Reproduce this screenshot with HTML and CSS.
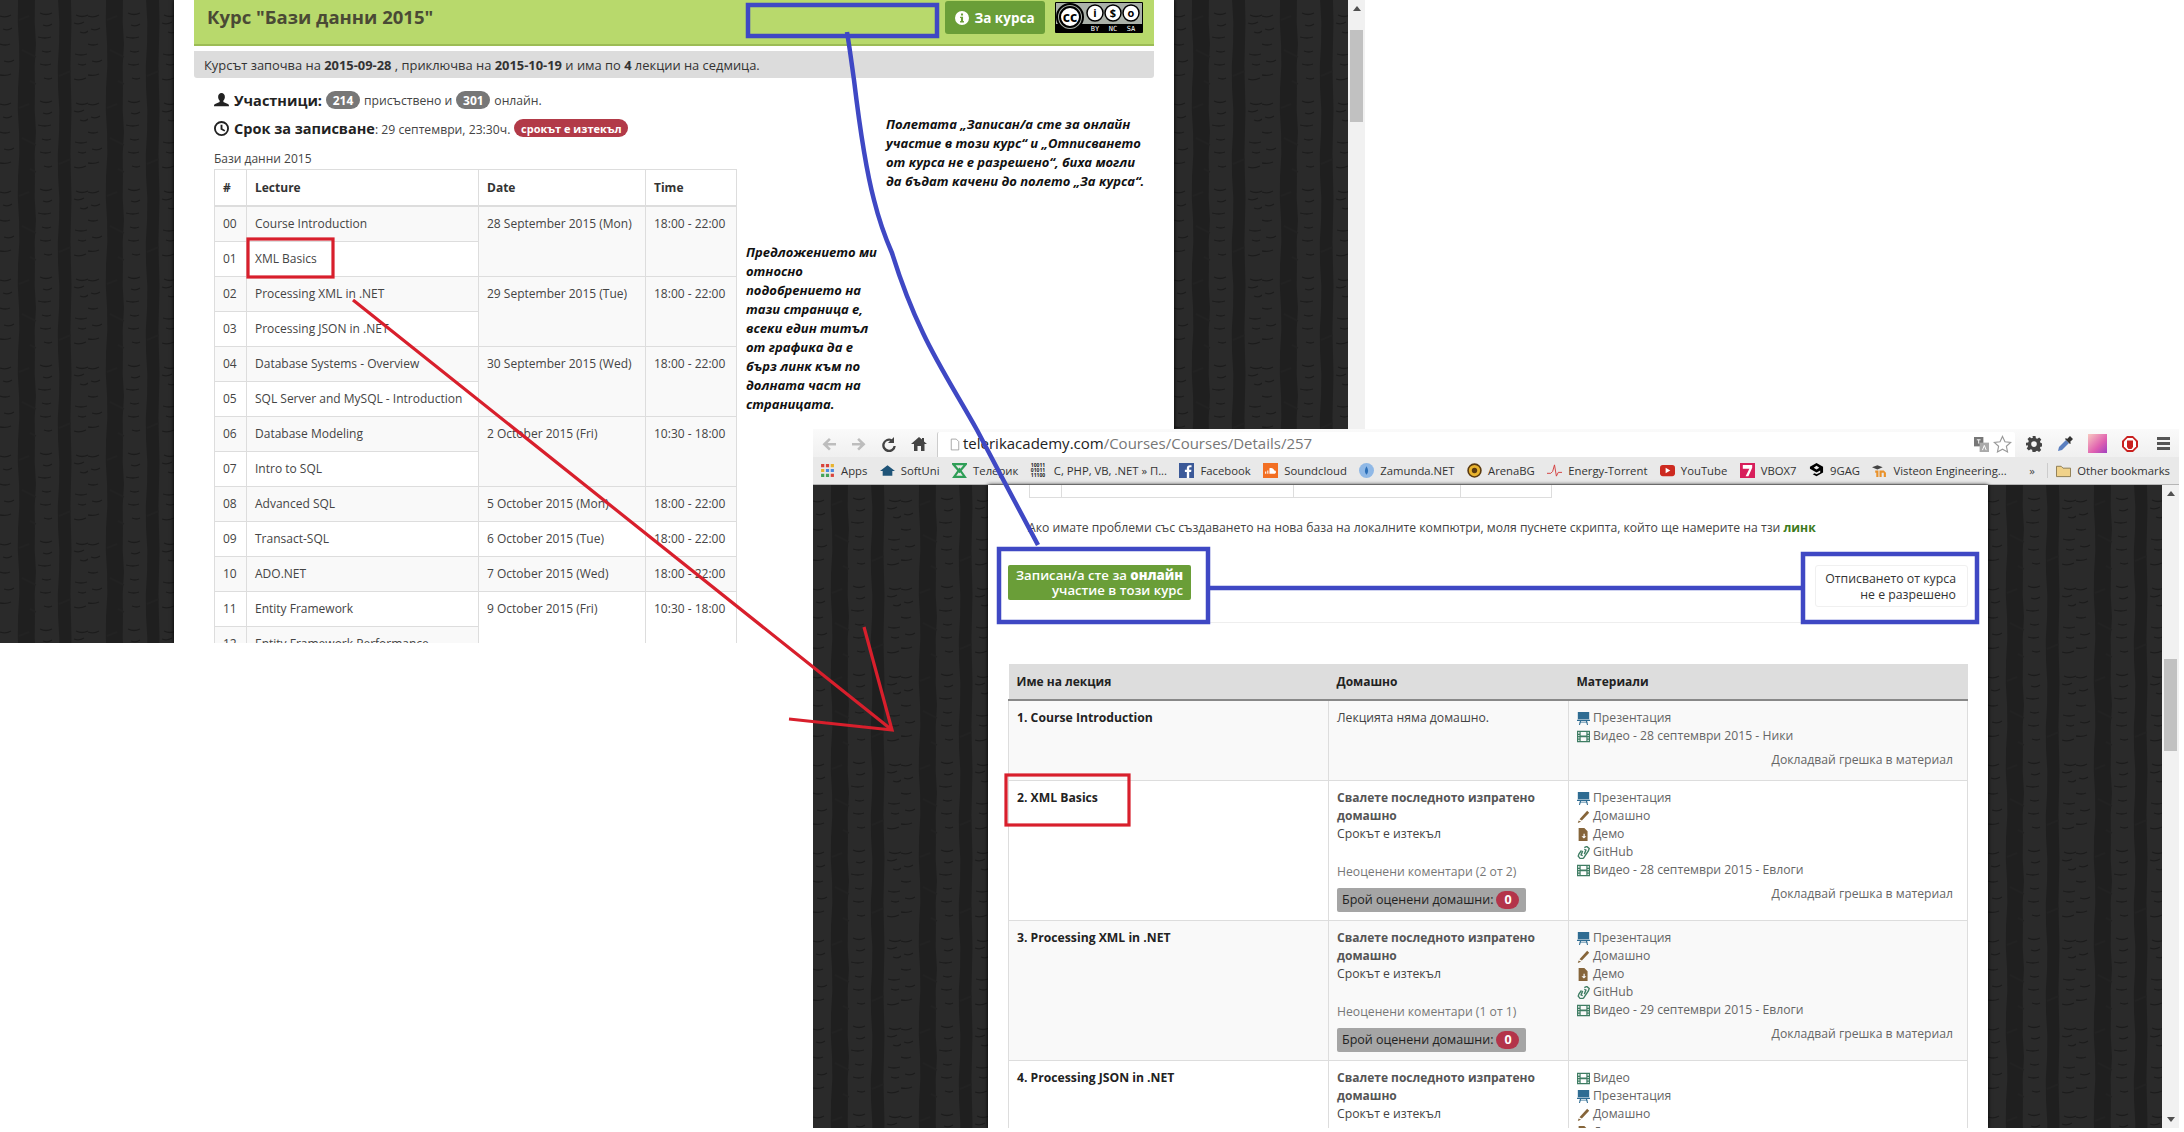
FILE: index.html
```html
<!DOCTYPE html>
<html lang="bg">
<head>
    <meta charset="UTF-8">
    <title>Курс "Бази данни 2015"</title>
    <link rel="stylesheet" href="styles.css">
</head>
<body>
<svg class="defs" aria-hidden="true">
    <defs>
        <!-- dark tree bark background of the site -->
        <pattern id="bark" width="88" height="88" patternUnits="userSpaceOnUse">
            <rect width="88" height="88" fill="#2a2a2a"/>
            <path d="M18 0 Q17 22 19 44 Q20 66 18 88 H35 Q34 66 36 44 Q34 22 35 0Z" fill="#1f1f1f"/>
            <path d="M58 0 Q60 22 59 44 Q57 66 58 88 H71 Q70 66 71 44 Q72 22 71 0Z" fill="#1f1f1f"/>
            <g fill="none" stroke="#1c1c1c" stroke-width="1.3">
                <path d="M0 16q6 2 11-1M3 29q5 2 9-1M0 44q6 2 10 0M4 61q6 2 10-1M0 75q7 1 11-1"/>
                <path d="M40 13q6 3 12 0M43 25q5 2 9-1M38 37q7 2 13 0M42 51q5 2 9 0M40 64q6 2 11 0M44 78q5 2 8 0"/>
                <path d="M76 15q6 3 12 0M74 23q5 2 10-1M80 32q5 2 8-1M75 54q6 2 12 0M78 64q5 2 8 0M74 79q6 2 12-1"/>
            </g>
            <g fill="none" stroke="#222" stroke-width="1.4">
                <path d="M19 20l10-4M22 50l14 7M59 76l12-5M36 84l-6-3"/>
            </g>
        </pattern>
        <symbol id="i-user" viewBox="0 0 16 16"><path d="M8 0c2.2 0 3.6 1.8 3.6 4.2 0 1.700-.7 3-1.600 3.800v1.500l4.800 2.200c.8.400 1.200 1 1.200 2.300H0c0-1.300.4-1.900 1.200-2.300L6 9.500V8C5.100 7.200 4.400 5.900 4.400 4.200 4.400 1.800 5.800 0 8 0z"/></symbol>
        <symbol id="i-clock" viewBox="0 0 16 16"><path fill-rule="evenodd" d="M8 0a8 8 0 1 1 0 16A8 8 0 0 1 8 0zm0 2a6 6 0 1 0 0 12A6 6 0 0 0 8 2zM7 4h2v4l3 1.800-1 1.500L7 9z"/></symbol>
        <symbol id="i-info" viewBox="0 0 16 16"><path fill-rule="evenodd" d="M8 0a8 8 0 1 1 0 16A8 8 0 0 1 8 0zM6.800 2.800v2.400h2.400V2.800zM5.800 6.600v1.500h1v3.200h-1v1.700h4.400v-1.700h-1V6.600z"/></symbol>
        <symbol id="i-slides" viewBox="0 0 16 16"><path fill="#2f6c92" d="M1 0h14v9H1z"/><path fill="#2f6c92" d="M0 9.500h16V11H0zM3 12h10v1H3z"/><path fill="none" stroke="#2f6c92" stroke-width="1.300" d="M4.500 11l-1.500 5M11.500 11l1.500 5"/></symbol>
        <symbol id="i-film" viewBox="0 0 16 16"><path fill="#3f7d63" fill-rule="evenodd" d="M0 1h16v14H0zM1.500 2.500v2h1.500v-2zM1.500 6v1.500h1.500V6zM1.500 9v1.500h1.500V9zM1.500 12v1.500h1.500V12zM13 2.500v2h1.500v-2zM13 6v1.500h1.500V6zM13 9v1.500h1.500V9zM13 12v1.500h1.500V12zM4.500 2.500v4.200h7V2.500zM4.500 9v4.500h7V9z"/></symbol>
        <symbol id="i-pencil" viewBox="0 0 16 16"><path fill="#86653a" d="M12.500 1l2.500 2.500-9 9.500-3-1.500zM2 13l3 1.500-4 1.500z"/></symbol>
        <symbol id="i-demo" viewBox="0 0 16 16"><path fill="#86653a" fill-rule="evenodd" d="M2 0h7l4 4v12H2zM8 7v3H5.500L8.500 13l3-3H9.500V7z"/></symbol>
        <symbol id="i-link" viewBox="0 0 16 16"><g fill="none" stroke="#3f7d63" stroke-width="1.700"><path d="M9 2l3-1.500 3 2.500-1 3-6 9-4 .5-2.500-3 1-3 3-4"/><path d="M7 6l-2 5 2 1M9 10l2-5-2-1"/></g></symbol>
        <symbol id="i-back" viewBox="0 0 16 16"><path d="M8 2l1.800 1.800L6.600 7H15v2.500H6.600l3.200 3.200L8 14.500 1.500 8.200z"/></symbol>
        <symbol id="i-reload" viewBox="0 0 16 16"><path d="M13 1v6H7l2.200-2.200A4.500 4.500 0 1 0 12.500 10h2.300A6.800 6.800 0 1 1 10.800 3.200z"/></symbol>
        <symbol id="i-home" viewBox="0 0 16 16"><path d="M8 1l3 2.600V2h2v3.400L16 8h-2.500v7H10v-5H6.500v5H3V8H0z"/></symbol>
        <symbol id="i-gear" viewBox="0 0 16 16"><path fill-rule="evenodd" d="M6.500 0h3l.4 2.200 1.400.6L13.200 1.500l2.100 2.100-1.300 1.900.6 1.400 2 .4v3l-2.100.4-.6 1.400 1.300 1.800-2.100 2.100-1.900-1.300-1.400.6L9.500 16h-3l-.4-2.200-1.400-.6-1.900 1.300-2.100-2.100 1.300-1.800-.6-1.500L0 9.800v-3l2.200-.4.600-1.400-1.300-1.900 2.100-2.100 1.900 1.300 1.400-.6zM8 5.300a2.800 2.800 0 1 0 0 5.600 2.800 2.800 0 0 0 0-5.600z"/></symbol>
    </defs>
</svg>

<div class="canvas">

    <!-- older screenshot, the page with the programme -->
    <section class="shot shot-old">
        <svg class="bark side-old"><rect width="100%" height="100%" fill="url(#bark)"/></svg>
        <div class="old-page">
            <header class="course-head">
                <h1>Курс "Бази данни 2015"</h1>
                <a class="about-btn"><svg class="ico-sm"><use href="#i-info"/></svg>За курса</a>
                <svg class="cc-badge" viewBox="0 0 88 31">
                    <rect width="88" height="31" rx="1" fill="#000"/>
                    <rect x="1" y="1" width="86" height="21" fill="#aab1a9"/>
                    <circle cx="15" cy="15" r="13" fill="#aab1a9" stroke="#000" stroke-width="2"/>
                    <circle cx="15" cy="15" r="10" fill="#fff" stroke="#000" stroke-width="2"/>
                    <text x="15" y="19.500" class="cc-big">cc</text>
                    <circle cx="40" cy="11" r="8" fill="#fff" stroke="#000" stroke-width="1.500"/>
                    <text x="40" y="15" class="cc-mid">i</text>
                    <circle cx="58" cy="11" r="8" fill="#fff" stroke="#000" stroke-width="1.500"/>
                    <text x="58" y="15" class="cc-mid">$</text>
                    <circle cx="76" cy="11" r="8" fill="#fff" stroke="#000" stroke-width="1.500"/>
                    <text x="76" y="15" class="cc-mid">o</text>
                    <text x="40" y="29" class="cc-low">BY</text>
                    <text x="58" y="29" class="cc-low">NC</text>
                    <text x="76" y="29" class="cc-low">SA</text>
                </svg>
            </header>
            <div class="course-dates">
                Курсът започва на <b>2015-09-28</b> , приключва на <b>2015-10-19</b> и има по <b>4</b> лекции на седмица.
            </div>
            <div class="info-line first">
                <svg class="ico-lg"><use href="#i-user"/></svg>
                <strong>Участници:</strong>
                <span class="pill">214</span> присъствено и <span class="pill">301</span> онлайн.
            </div>
            <div class="info-line">
                <svg class="ico-lg"><use href="#i-clock"/></svg>
                <span><strong>Срок за записване</strong>: 29 септември, 23:30ч.</span>
                <span class="pill pill-red">срокът е изтекъл</span>
            </div>
            <div class="caption">Бази данни 2015</div>
            <table class="programme">
                <thead>
                    <tr><th class="c-num">#</th><th class="c-lec">Lecture</th><th class="c-date">Date</th><th>Time</th></tr>
                </thead>
                <tbody>
                    <tr><td>00</td><td>Course Introduction</td><td rowspan="2">28 September 2015 (Mon)</td><td rowspan="2">18:00 - 22:00</td></tr>
                    <tr><td>01</td><td>XML Basics</td></tr>
                    <tr><td>02</td><td>Processing XML in .NET</td><td rowspan="2">29 September 2015 (Tue)</td><td rowspan="2">18:00 - 22:00</td></tr>
                    <tr><td>03</td><td>Processing JSON in .NET</td></tr>
                    <tr><td>04</td><td>Database Systems - Overview</td><td rowspan="2">30 September 2015 (Wed)</td><td rowspan="2">18:00 - 22:00</td></tr>
                    <tr><td>05</td><td>SQL Server and MySQL - Introduction</td></tr>
                    <tr><td>06</td><td>Database Modeling</td><td rowspan="2">2 October 2015 (Fri)</td><td rowspan="2">10:30 - 18:00</td></tr>
                    <tr><td>07</td><td>Intro to SQL</td></tr>
                    <tr><td>08</td><td>Advanced SQL</td><td>5 October 2015 (Mon)</td><td>18:00 - 22:00</td></tr>
                    <tr><td>09</td><td>Transact-SQL</td><td>6 October 2015 (Tue)</td><td>18:00 - 22:00</td></tr>
                    <tr><td>10</td><td>ADO.NET</td><td>7 October 2015 (Wed)</td><td>18:00 - 22:00</td></tr>
                    <tr class="white-row"><td>11</td><td>Entity Framework</td><td rowspan="2">9 October 2015 (Fri)</td><td rowspan="2">10:30 - 18:00</td></tr>
                    <tr><td>12</td><td>Entity Framework Performance</td></tr>
                </tbody>
            </table>
        </div>
        <svg class="bark side-old"><rect width="100%" height="100%" fill="url(#bark)"/></svg>
        <div class="scrollbar">
            <i class="arrow-up"></i>
            <i class="thumb thumb-old"></i>
        </div>
    </section>

    <!-- newer screenshot, browser window with the lecture table -->
    <section class="shot shot-new">
        <div class="toolbar">
            <svg class="nav-ico faded"><use href="#i-back"/></svg>
            <svg class="nav-ico faded flip"><use href="#i-back"/></svg>
            <svg class="nav-ico"><use href="#i-reload"/></svg>
            <svg class="nav-ico"><use href="#i-home"/></svg>
            <div class="omnibox">
                <svg class="doc-ico" viewBox="0 0 12 14"><path d="M1.500.5h6l3 3v10h-9z" fill="#fff" stroke="#999"/></svg>
                <span class="url">telerikacademy.com<span class="url-path">/Courses/Courses/Details/257</span></span>
                <svg class="trans-ico" viewBox="0 0 16 16"><path d="M0 0h10v10H0z" fill="#777"/><path d="M6 6h10v10H6z" fill="#aaa"/><path d="M3 3h4M5 3v4M9 14l2-5 2 5" fill="none" stroke="#fff"/></svg>
                <svg class="star-ico" viewBox="0 0 20 20"><path d="M10 1.500l2.600 5.600 6 .7-4.500 4.100 1.200 6L10 15l-5.300 2.900 1.200-6L1.400 7.800l6-.7z" fill="#fff" stroke="#999" stroke-width="1.200"/></svg>
            </div>
            <div class="tool-actions">
                <svg class="nav-ico"><use href="#i-gear"/></svg>
                <svg class="nav-ico" viewBox="0 0 16 16"><path d="M1 15l1-4 7-7 3 3-7 7z" fill="#5b7fc0"/><path d="M10 3l3-3 3 3-3 3 1 1-1 1-5-5 1-1z" fill="#333"/></svg>
                <i class="color-tile"></i>
                <svg class="nav-ico" viewBox="0 0 16 16"><path d="M5 0h6l5 5v6l-5 5H5l-5-5V5z" fill="#c9201f"/><path d="M5.500 2h5L14 5.500v5L10.500 14h-5L2 10.500v-5z" fill="#fff"/><path d="M5 4.500h6V11l-1.500 2h-3L5 11z" fill="#c9201f"/></svg>
                <span class="menu-ico"><i></i><i></i><i></i></span>
            </div>
        </div>

        <nav class="bookmarks">
            <a><svg class="bm" viewBox="0 0 14 14"><path fill="#d9443a" d="M1 1h3v3H1zM5.500 1h3v3h-3z"/><path fill="#e8b32e" d="M10 1h3v3h-3zM1 5.500h3v3H1z"/><path fill="#4a8ae0" d="M5.500 5.500h3v3h-3zM10 5.500h3v3h-3z"/><path fill="#46a35a" d="M1 10h3v3H1zM5.500 10h3v3h-3z"/><path fill="#d9443a" d="M10 10h3v3h-3z"/></svg>Apps</a>
            <a><svg class="bm" viewBox="0 0 14 14"><path fill="#1f5478" d="M7 2l7 5.500h-2.500V12h-9V7.500H0z"/></svg>SoftUni</a>
            <a><svg class="bm" viewBox="0 0 14 14"><path fill="none" stroke="#2f9e57" stroke-width="2" d="M1 1h12L7 8zM7 6l5 7H2z"/></svg>Телерик</a>
            <a><span class="binary">10011<br>01011<br>11100</span>C, PHP, VB, .NET » П...</a>
            <a><svg class="bm" viewBox="0 0 14 14"><path fill="#3b5998" d="M0 0h14v14H0z"/><path fill="#fff" d="M9.500 14V8.500h1.800l.3-2.200H9.500V5c0-.6.200-1 1-1h1.200V2.100C11.400 2 10.800 2 10.200 2 8.500 2 7.300 3 7.300 4.800v1.500H5.500v2.200h1.800V14z"/></svg>Facebook</a>
            <a><svg class="bm" viewBox="0 0 14 14"><path fill="#f26f23" d="M0 0h14v14H0z"/><path fill="#fff" d="M2 10V8h1v2zM4 10V7h1v3zM6 10V5c2-1 4 0 4.500 2 2-.5 2.500 3-.5 3z"/></svg>Soundcloud</a>
            <a><svg class="bm" viewBox="0 0 14 14"><circle cx="7" cy="7" r="7" fill="#8fb8e6"/><path fill="#2c6fb8" d="M7 3c-2 3-2 6 0 8 2-2 2-5 0-8z"/></svg>Zamunda.NET</a>
            <a><svg class="bm" viewBox="0 0 14 14"><circle cx="7" cy="7" r="6" fill="#e8b32e" stroke="#5a3a10" stroke-width="1.500"/><circle cx="7" cy="7" r="2.500" fill="#5a3a10"/></svg>ArenaBG</a>
            <a><svg class="bm" viewBox="0 0 16 14"><path fill="none" stroke="#d33c3c" d="M0 10h4l2-2 2-7 2 12 2-4h4"/></svg>Energy-Torrent</a>
            <a><svg class="bm" viewBox="0 0 16 14"><rect y="1" width="16" height="12" rx="3" fill="#cd2a20"/><path fill="#fff" d="M6 4l5 3-5 3z"/></svg>YouTube</a>
            <a><svg class="bm" viewBox="0 0 16 16"><path fill="#d81f5b" d="M0 0h16v16H0z"/><path fill="#fff" d="M3 2h10v3l-4 9H6l4-8H3z"/></svg>VBOX7</a>
            <a><svg class="bm" viewBox="0 0 14 16"><path fill="#000" fill-rule="evenodd" d="M7 0l7 4v6l-7 4-4-2 2-1 2 1 4-2V8L7 10 0 6V4zM7 3L4 5l3 2 3-2z"/></svg>9GAG</a>
            <a><svg class="bm" viewBox="0 0 14 14"><path fill="#444" d="M0 4l5-2 5 2-5 2z"/><path fill="#e9922b" d="M3 7h3v6H4V9H3zM7 7h4l2 2v4h-2V9H9v4H7z"/></svg>Visteon Engineering...</a>
            <span class="more">»</span>
            <a class="other"><svg class="bm" viewBox="0 0 16 14"><path d="M.5 2.500h5l2 2h8v9H.5z" fill="#f0d28a" stroke="#8b7a50"/></svg>Other bookmarks</a>
        </nav>

        <div class="viewport">
            <svg class="bark side-new"><rect width="100%" height="100%" fill="url(#bark)"/></svg>
            <div class="new-page">
                <div class="table-stub"><i></i><i></i><i></i><i></i></div>
                <p class="db-note">Ако имате проблеми със създаването на нова база на локалните компютри, моля пуснете скрипта, който ще намерите на тзи <a>линк</a></p>
                <div class="enroll-row">
                    <div class="enrolled">Записан/а сте за <b>онлайн</b><br>участие в този курс</div>
                    <div class="no-leave">Отписването от курса<br>не е разрешено</div>
                </div>
                <table class="lectures">
                    <thead>
                        <tr><th class="l-name">Име на лекция</th><th class="l-home">Домашно</th><th>Материали</th></tr>
                    </thead>
                    <tbody>
                        <tr>
                            <td class="lec-title">1. Course Introduction</td>
                            <td><div class="hw-line">Лекцията няма домашно.</div></td>
                            <td>
                                <div class="mat"><svg><use href="#i-slides"/></svg>Презентация</div>
                                <div class="mat"><svg><use href="#i-film"/></svg>Видео - 28 септември 2015 - Ники</div>
                                <div class="report">Докладвай грешка в материал</div>
                            </td>
                        </tr>
                        <tr>
                            <td class="lec-title">2. XML Basics</td>
                            <td>
                                <div class="hw-get">Свалете последното изпратено домашно</div>
                                <div class="hw-line">Срокът е изтекъл</div>
                                <div class="hw-unrated">Неоценени коментари (2 от 2)</div>
                                <div class="hw-count">Брой оценени домашни: <span class="zero">0</span></div>
                            </td>
                            <td>
                                <div class="mat"><svg><use href="#i-slides"/></svg>Презентация</div>
                                <div class="mat"><svg><use href="#i-pencil"/></svg>Домашно</div>
                                <div class="mat"><svg><use href="#i-demo"/></svg>Демо</div>
                                <div class="mat"><svg><use href="#i-link"/></svg>GitHub</div>
                                <div class="mat"><svg><use href="#i-film"/></svg>Видео - 28 септември 2015 - Евлоги</div>
                                <div class="report">Докладвай грешка в материал</div>
                            </td>
                        </tr>
                        <tr>
                            <td class="lec-title">3. Processing XML in .NET</td>
                            <td>
                                <div class="hw-get">Свалете последното изпратено домашно</div>
                                <div class="hw-line">Срокът е изтекъл</div>
                                <div class="hw-unrated">Неоценени коментари (1 от 1)</div>
                                <div class="hw-count">Брой оценени домашни: <span class="zero">0</span></div>
                            </td>
                            <td>
                                <div class="mat"><svg><use href="#i-slides"/></svg>Презентация</div>
                                <div class="mat"><svg><use href="#i-pencil"/></svg>Домашно</div>
                                <div class="mat"><svg><use href="#i-demo"/></svg>Демо</div>
                                <div class="mat"><svg><use href="#i-link"/></svg>GitHub</div>
                                <div class="mat"><svg><use href="#i-film"/></svg>Видео - 29 септември 2015 - Евлоги</div>
                                <div class="report">Докладвай грешка в материал</div>
                            </td>
                        </tr>
                        <tr>
                            <td class="lec-title">4. Processing JSON in .NET</td>
                            <td>
                                <div class="hw-get">Свалете последното изпратено домашно</div>
                                <div class="hw-line">Срокът е изтекъл</div>
                            </td>
                            <td>
                                <div class="mat"><svg><use href="#i-film"/></svg>Видео</div>
                                <div class="mat"><svg><use href="#i-slides"/></svg>Презентация</div>
                                <div class="mat"><svg><use href="#i-pencil"/></svg>Домашно</div>
                                <div class="mat"><svg><use href="#i-demo"/></svg>Демо</div>
                            </td>
                        </tr>
                    </tbody>
                </table>
            </div>
            <svg class="bark side-new-right"><rect width="100%" height="100%" fill="url(#bark)"/></svg>
            <div class="scrollbar">
                <i class="arrow-up"></i>
                <i class="thumb thumb-new"></i>
                <i class="arrow-down"></i>
            </div>
        </div>
    </section>

    <!-- notes written over the screenshots -->
    <p class="note note-fields">Полетата „Записан/а сте за онлайн<br>участие в този курс“ и „Отписването<br>от курса не е разрешено“, биха могли<br>да бъдат качени до полето „За курса“.</p>
    <p class="note note-links">Предложението ми<br>относно<br>подобрението на<br>тази страница е,<br>всеки един титъл<br>от графика да е<br>бърз линк към по<br>долната част на<br>страницата.</p>

    <svg class="marks" viewBox="0 0 2184 1132">
        <g fill="none" stroke="#3f48c4" stroke-width="4.500">
            <rect x="748" y="5" width="189" height="31"/>
            <rect x="999" y="549" width="209" height="73"/>
            <rect x="1803" y="554" width="174" height="68"/>
            <path d="M1210 588H1801"/>
            <path d="M847 32C850 50 852 66 854 80 860 130 866 170 874 200 879 220 885 237 892 253 901 282 911 308 923 333 938 365 958 396 977 430 997 468 1018 508 1038 545"/>
        </g>
        <g fill="none" stroke="#d81f2c" stroke-width="3.200">
            <rect x="248" y="239" width="85" height="38"/>
            <rect x="1006" y="775" width="123" height="50"/>
            <path d="M353 300L892 730M864 627L892 730 789 719"/>
        </g>
    </svg>
</div>
</body>
</html>
```

FILE: styles.css
```css
html, body {
    margin: 0;
    padding: 0;
    background: #fff;
}
body {
    font-family: "Open Sans", "Noto Sans", Arial, sans-serif;
    font-size: 12.200px;
    color: #444;
}
table {
    border-collapse: collapse;
    table-layout: fixed;
}
.defs {
    position: absolute;
    width: 0;
    height: 0;
}
.canvas {
    position: relative;
    width: 2184px;
    height: 1132px;
    overflow: hidden;
    background: #fff;
}
.shot {
    position: absolute;
    overflow: hidden;
}
.bark {
    display: block;
    flex: none;
    height: 100%;
}

/* Scrollbars */
.scrollbar {
    flex: none;
    width: 17px;
    display: flex;
    flex-direction: column;
    align-items: center;
    background: #f1f1f1;
}
.arrow-up, .arrow-down {
    width: 0;
    height: 0;
    border-left: 4px solid transparent;
    border-right: 4px solid transparent;
}
.arrow-up {
    margin-top: 6px;
    border-bottom: 5px solid #505050;
}
.arrow-down {
    margin-top: auto;
    margin-bottom: 6px;
    border-top: 5px solid #505050;
}
.thumb {
    width: 13px;
    background: #c1c1c1;
}
.thumb-old {
    margin-top: 19px;
    height: 92px;
}
.thumb-new {
    margin-top: 163px;
    height: 92px;
}

/* Old screenshot */
.shot-old {
    left: 0;
    top: 0;
    width: 1365px;
    height: 643px;
    display: flex;
}
.side-old {
    width: 174px;
}
.old-page {
    flex: none;
    width: 1000px;
    box-sizing: border-box;
    padding: 0 20px;
    background: #fff;
    box-shadow: 0 0 4px #000;
    position: relative;
    overflow: hidden;
}
.course-head {
    height: 44px;
    display: flex;
    align-items: flex-start;
    padding: 0 11px 0 13px;
    background: #b8d96c;
    border-bottom: 2px solid #9cbc55;
}
.course-head h1 {
    margin: 2px auto 0 0;
    font-size: 18.500px;
    line-height: 30px;
    font-weight: 700;
    color: #4a4a35;
}
.about-btn {
    width: 100px;
    height: 33px;
    margin: 1px 10px 0 0;
    display: flex;
    align-items: center;
    justify-content: center;
    gap: 5px;
    border-radius: 3px;
    background: #6a9e38;
    color: #fff;
    font-size: 13.500px;
    font-weight: 700;
}
.ico-sm {
    width: 14px;
    height: 14px;
    fill: #fff;
}
.cc-badge {
    width: 88px;
    height: 31px;
    margin-top: 2px;
}
.cc-big, .cc-mid, .cc-low {
    text-anchor: middle;
    font-weight: 700;
}
.cc-big {
    font-size: 14px;
}
.cc-mid {
    font-size: 11px;
}
.cc-low {
    font-family: "DejaVu Sans Mono", monospace;
    font-size: 7px;
    font-weight: 400;
    fill: #fff;
}
.course-dates {
    height: 27px;
    margin-top: 5px;
    padding-left: 10px;
    line-height: 29px;
    background: #dcdcdc;
    border-radius: 0 0 3px 3px;
    color: #333;
    font-size: 12.900px;
}
.info-line {
    height: 18px;
    margin: 10px 0 0 20px;
    display: flex;
    align-items: center;
    gap: 4px;
    font-size: 12.200px;
}
.info-line.first {
    margin-top: 13px;
}
.info-line strong {
    font-size: 14.500px;
    color: #222;
}
.ico-lg {
    width: 15px;
    height: 15px;
    margin-right: 1px;
    fill: #222;
}
.pill {
    height: 18px;
    min-width: 34px;
    line-height: 19px;
    border-radius: 9px;
    background: #777;
    color: #fff;
    font-size: 12px;
    font-weight: 700;
    text-align: center;
}
.pill-red {
    width: 114px;
    background: #b23a48;
    font-size: 11px;
}
.caption {
    margin: 13px 0 0 20px;
    line-height: 18px;
    font-size: 12px;
}
.programme {
    width: 523px;
    margin: 1px 0 0 20px;
    line-height: 18px;
    font-size: 12px;
}
.programme th, .programme td {
    padding: 8px;
    border: 1px solid #ddd;
    text-align: left;
    vertical-align: top;
    white-space: nowrap;
}
.programme th {
    border-bottom-width: 2px;
    padding-top: 9px;
    color: #333;
}
.programme tbody tr:nth-child(odd) td {
    background: #f9f9f9;
}
.programme tbody tr.white-row td {
    background: #fff;
}
.c-num {
    width: 15px;
}
.c-lec {
    width: 215px;
}
.c-date {
    width: 150px;
}

/* Browser window */
.shot-new {
    left: 813px;
    top: 429px;
    width: 1366px;
    height: 699px;
    display: flex;
    flex-direction: column;
}
.toolbar {
    flex: none;
    height: 28px;
    box-sizing: border-box;
    padding: 1px 8px 0;
    display: flex;
    align-items: center;
    gap: 14px;
    background: linear-gradient(#fafafa, #f0f0f0);
}
.nav-ico {
    flex: none;
    width: 16px;
    height: 16px;
    fill: #444;
}
.nav-ico.faded {
    fill: #bdbdbd;
}
.flip {
    transform: scaleX(-1);
}
.omnibox {
    flex: 1;
    align-self: flex-end;
    height: 25px;
    margin-left: -4px;
    padding: 0 3px 0 12px;
    display: flex;
    align-items: center;
    background: #fff;
    border-radius: 2px 2px 0 0;
    border-left: 1px solid #ccc;
    box-sizing: border-box;
}
.doc-ico {
    width: 10px;
    height: 13px;
    margin-right: 3px;
}
.url {
    margin: -3px auto 0 0;
    font-size: 15px;
    color: #222;
}
.url-path {
    color: #777;
}
.trans-ico {
    width: 15px;
    height: 15px;
    margin-right: 4px;
}
.star-ico {
    width: 19px;
    height: 19px;
}
.tool-actions {
    flex: none;
    margin-left: -3px;
    display: flex;
    align-items: center;
    gap: 15px;
}
.color-tile {
    flex: none;
    width: 19px;
    height: 19px;
    background: linear-gradient(135deg, #f8c8c0, #e060b0 60%, #a040c0);
}
.menu-ico {
    width: 16px;
    margin-left: 2px;
    display: flex;
    flex-direction: column;
    align-items: center;
    gap: 2px;
}
.menu-ico i {
    width: 13px;
    height: 3px;
    background: #555;
}
.bookmarks {
    flex: none;
    height: 28px;
    box-sizing: border-box;
    padding: 0 9px 1px 7px;
    display: flex;
    align-items: center;
    justify-content: space-between;
    background: #e9e9e9;
    border-bottom: 1px solid #b5b5b5;
    font-size: 11.300px;
    color: #333;
}
.bookmarks a {
    display: flex;
    align-items: center;
    gap: 6px;
}
.bm {
    width: 15px;
    height: 15px;
    flex: none;
}
.binary {
    width: 17px;
    font-size: 5px;
    line-height: 5px;
    font-weight: 700;
    color: #222;
}
.more {
    color: #444;
    padding-left: 10px;
}
.other {
    padding-left: 8px;
    border-left: 1px solid #ccc;
}
.viewport {
    flex: 1;
    min-height: 0;
    display: flex;
}
.side-new {
    width: 175px;
}
.side-new-right {
    width: 174px;
}
.new-page {
    flex: none;
    width: 1000px;
    box-sizing: border-box;
    padding: 0 20px;
    background: #fff;
    box-shadow: 0 0 4px #000;
    position: relative;
    overflow: hidden;
}
.table-stub {
    height: 12px;
    margin: 0 0 0 21px;
    display: grid;
    grid-template-columns: 32px 232px 167px 92px;
    width: 523px;
    border-bottom: 1px solid #ddd;
}
.table-stub i {
    border-left: 1px solid #ddd;
}
.table-stub i:last-child {
    border-right: 1px solid #ddd;
}
.db-note {
    margin: 21px 0 0 20px;
    line-height: 18px;
}
.db-note a {
    color: #3c7a20;
    font-weight: 700;
}
.enroll-row {
    margin-top: 28px;
    height: 57px;
    display: flex;
    justify-content: space-between;
    align-items: flex-start;
    border-bottom: 1px solid #eee;
}
.enrolled {
    width: 183px;
    height: 35px;
    box-sizing: border-box;
    padding: 3px 8px 0 0;
    text-align: right;
    line-height: 15px;
    font-size: 13.200px;
    font-weight: 600;
    color: #fff;
    background: #6a9e38;
    border-radius: 2px;
}
.enrolled b {
    font-weight: 800;
}
.no-leave {
    width: 153px;
    height: 42px;
    box-sizing: border-box;
    padding: 5px 11px 0 0;
    text-align: right;
    line-height: 16px;
    font-size: 12.300px;
    color: #333;
    border: 1px solid #f0f0f0;
    border-radius: 3px;
}
.lectures {
    width: 960px;
    margin-top: 41px;
    line-height: 18px;
}
.lectures th {
    height: 36px;
    box-sizing: border-box;
    padding: 0 8px;
    background: #ddd;
    border-bottom: 2px solid #888;
    color: #222;
    text-align: left;
    font-size: 12px;
}
.lectures td {
    padding: 8px 9px 8px 8px;
    border: 1px solid #ddd;
    vertical-align: top;
}
.lectures tbody tr:nth-child(odd) td {
    background: #f9f9f9;
}
.l-name {
    width: 320px;
}
.l-home {
    width: 240px;
}
.lec-title {
    font-weight: 700;
    color: #222;
}
.hw-get {
    font-size: 12px;
    font-weight: 700;
    color: #555;
}
.hw-unrated {
    margin-top: 20px;
    color: #777;
}
.hw-count {
    display: flex;
    align-items: center;
    gap: 3px;
    width: 189px;
    height: 24px;
    box-sizing: border-box;
    margin-top: 7px;
    padding-left: 5px;
    background: #a5a5a5;
    border-radius: 2px;
    color: #222;
    font-size: 12.500px;
}
.zero {
    width: 23px;
    height: 18px;
    border-radius: 9px;
    background: #b3344a;
    color: #fff;
    font-weight: 700;
    text-align: center;
}
.mat {
    display: flex;
    align-items: center;
    gap: 3px;
    color: #666;
}
.mat svg {
    width: 13px;
    height: 13px;
    flex: none;
}
.report {
    margin: 6px 5px 3px 0;
    text-align: right;
    color: #666;
}

/* Notes and marks drawn over the screenshots */
.note {
    position: absolute;
    margin: 0;
    line-height: 19px;
    font-size: 13px;
    font-weight: 700;
    font-style: italic;
    color: #111;
}
.note-fields {
    left: 886px;
    top: 115px;
}
.note-links {
    left: 746px;
    top: 243px;
}
.marks {
    position: absolute;
    left: 0;
    top: 0;
    width: 2184px;
    height: 1132px;
    pointer-events: none;
}
```
